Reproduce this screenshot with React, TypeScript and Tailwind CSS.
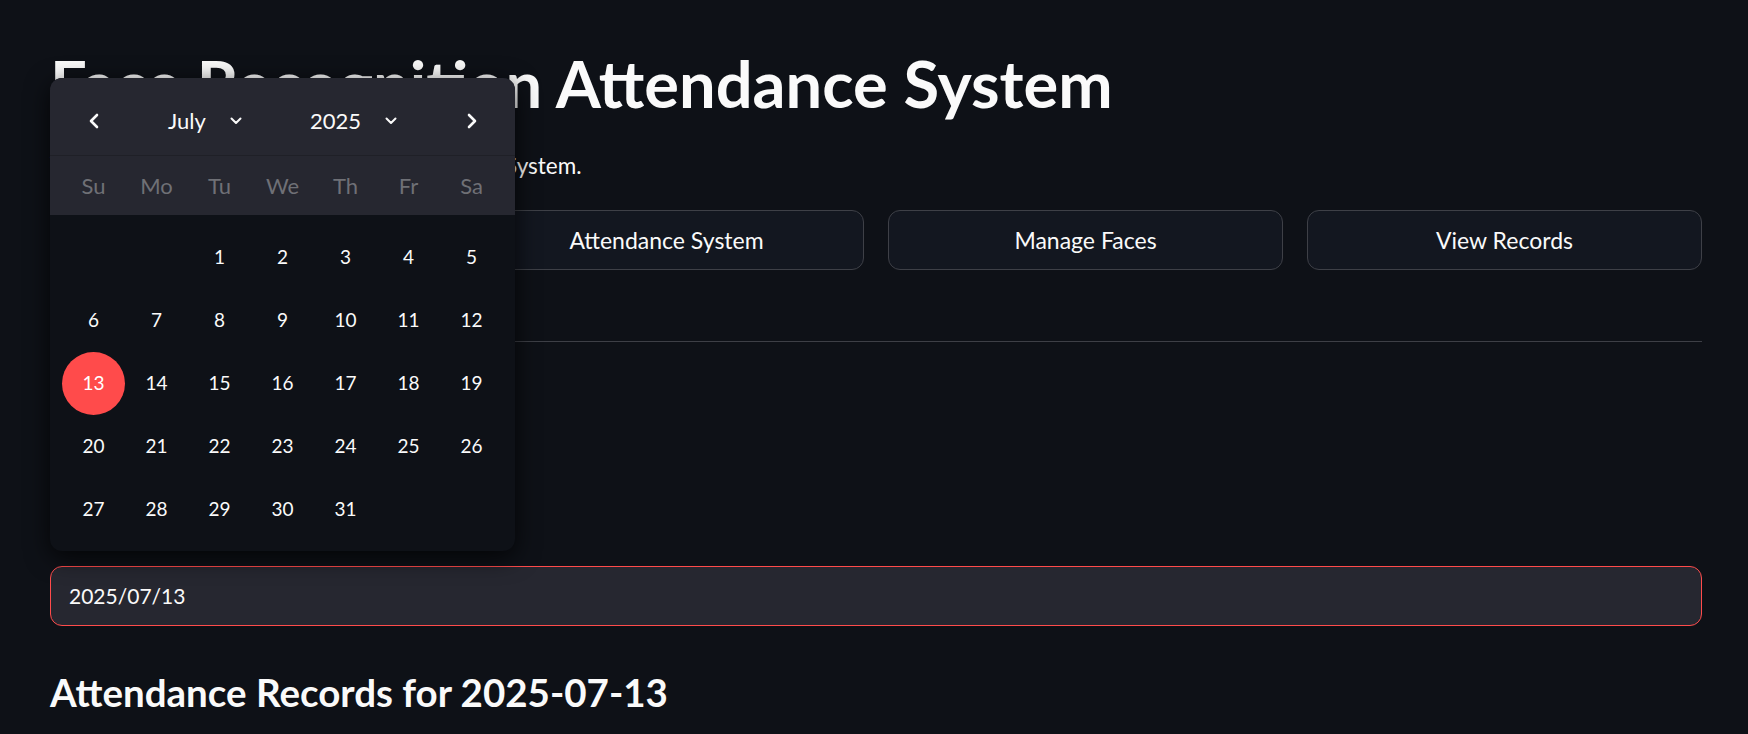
import type { ReactNode } from 'react'

const WEEKDAYS = ['Su', 'Mo', 'Tu', 'We', 'Th', 'Fr', 'Sa']
const NAV_BUTTONS = ['Register Face', 'Attendance System', 'Manage Faces', 'View Records']

// July 2025 starts on a Tuesday
const DAYS: (number | null)[] = [null, null, ...Array.from({ length: 31 }, (_, i) => i + 1)]
const SELECTED_DAY = 13

function ArrowIcon({ dir }: { dir: 'left' | 'right' }) {
  return (
    <svg width="14" height="16" viewBox="0 0 14 16" fill="none">
      <path
        d={dir === 'left' ? 'M10 2 L4 8 L10 14' : 'M4 2 L10 8 L4 14'}
        stroke="#fafafa"
        strokeWidth="2.6"
        strokeLinecap="round"
        strokeLinejoin="round"
      />
    </svg>
  )
}

function CaretDown() {
  return (
    <svg width="12" height="8" viewBox="0 0 12 8" fill="none">
      <path d="M1.5 1.5 L6 6 L10.5 1.5" stroke="#fafafa" strokeWidth="2" strokeLinecap="round" strokeLinejoin="round" />
    </svg>
  )
}

function SelectLabel({ children }: { children: ReactNode }) {
  return (
    <div className="flex items-center">
      <span>{children}</span>
      <span className="ml-[24px] flex items-center">
        <CaretDown />
      </span>
    </div>
  )
}

function DatePopover() {
  return (
    <div className="absolute left-[50px] top-[78px] w-[465px] rounded-[12px] bg-[#0e1117] shadow-[0_6px_24px_rgba(0,0,0,0.75)] overflow-hidden">
      <div className="bg-[#262730]">
        <div className="flex h-[78px] items-center px-[12px] pt-[8px] text-[22px] border-b border-[#1f2027]">
          <div className="flex w-[63px] justify-center">
            <ArrowIcon dir="left" />
          </div>
          <div className="flex flex-1 items-center justify-center gap-[68px]">
            <SelectLabel>July</SelectLabel>
            <SelectLabel>2025</SelectLabel>
          </div>
          <div className="flex w-[63px] justify-center">
            <ArrowIcon dir="right" />
          </div>
        </div>
        <div className="grid h-[59px] grid-cols-7 items-center px-[12px] text-[22px] text-[#6f7076]">
          {WEEKDAYS.map((d) => (
            <div key={d} className="text-center">{d}</div>
          ))}
        </div>
      </div>
      <div className="grid grid-cols-7 px-[12px] pt-[11px] pb-[10px] text-[19px]">
        {DAYS.map((day, i) => (
          <div key={i} className="flex h-[63px] items-center justify-center">
            {day === SELECTED_DAY ? (
              <div className="flex h-[63px] w-[63px] items-center justify-center rounded-full bg-[#ff4b4b] text-white">
                {day}
              </div>
            ) : (
              day
            )}
          </div>
        ))}
      </div>
    </div>
  )
}

export default function App() {
  return (
    <div
      className="relative h-[734px] overflow-hidden bg-[#0e1117] pl-[50px] pr-[46px] pt-[44px] text-[#fafafa]"
      style={{ fontFamily: 'Lato, "Noto Sans", sans-serif' }}
    >
      <h1 className="text-[65px] font-bold leading-[1.2]">Face Recognition Attendance System</h1>
      <p className="mt-[26px] text-[22.5px] leading-[36px]">Welcome to the Face Recognition Attendance System.</p>

      <div className="mt-[26px] grid grid-cols-4 gap-[24px]">
        {NAV_BUTTONS.map((label) => (
          <button
            key={label}
            className="flex h-[60px] items-center justify-center rounded-[12px] border border-[#3e4047] bg-[#131720] text-[23px] text-[#fafafa]"
          >
            {label}
          </button>
        ))}
      </div>

      <hr className="mt-[71px] border-0 border-t border-[#3d3f46]" />

      {/* header and date label sit under the open calendar */}
      <div className="h-[224px]" />

      <div className="flex h-[60px] items-center rounded-[12px] border border-[#ff4b4b] bg-[#262730] px-[18px] text-[21px]">
        2025/07/13
      </div>

      <h3 className="mt-[43px] text-[38.5px] font-bold leading-[1.2]">Attendance Records for 2025-07-13</h3>

      <DatePopover />
    </div>
  )
}
